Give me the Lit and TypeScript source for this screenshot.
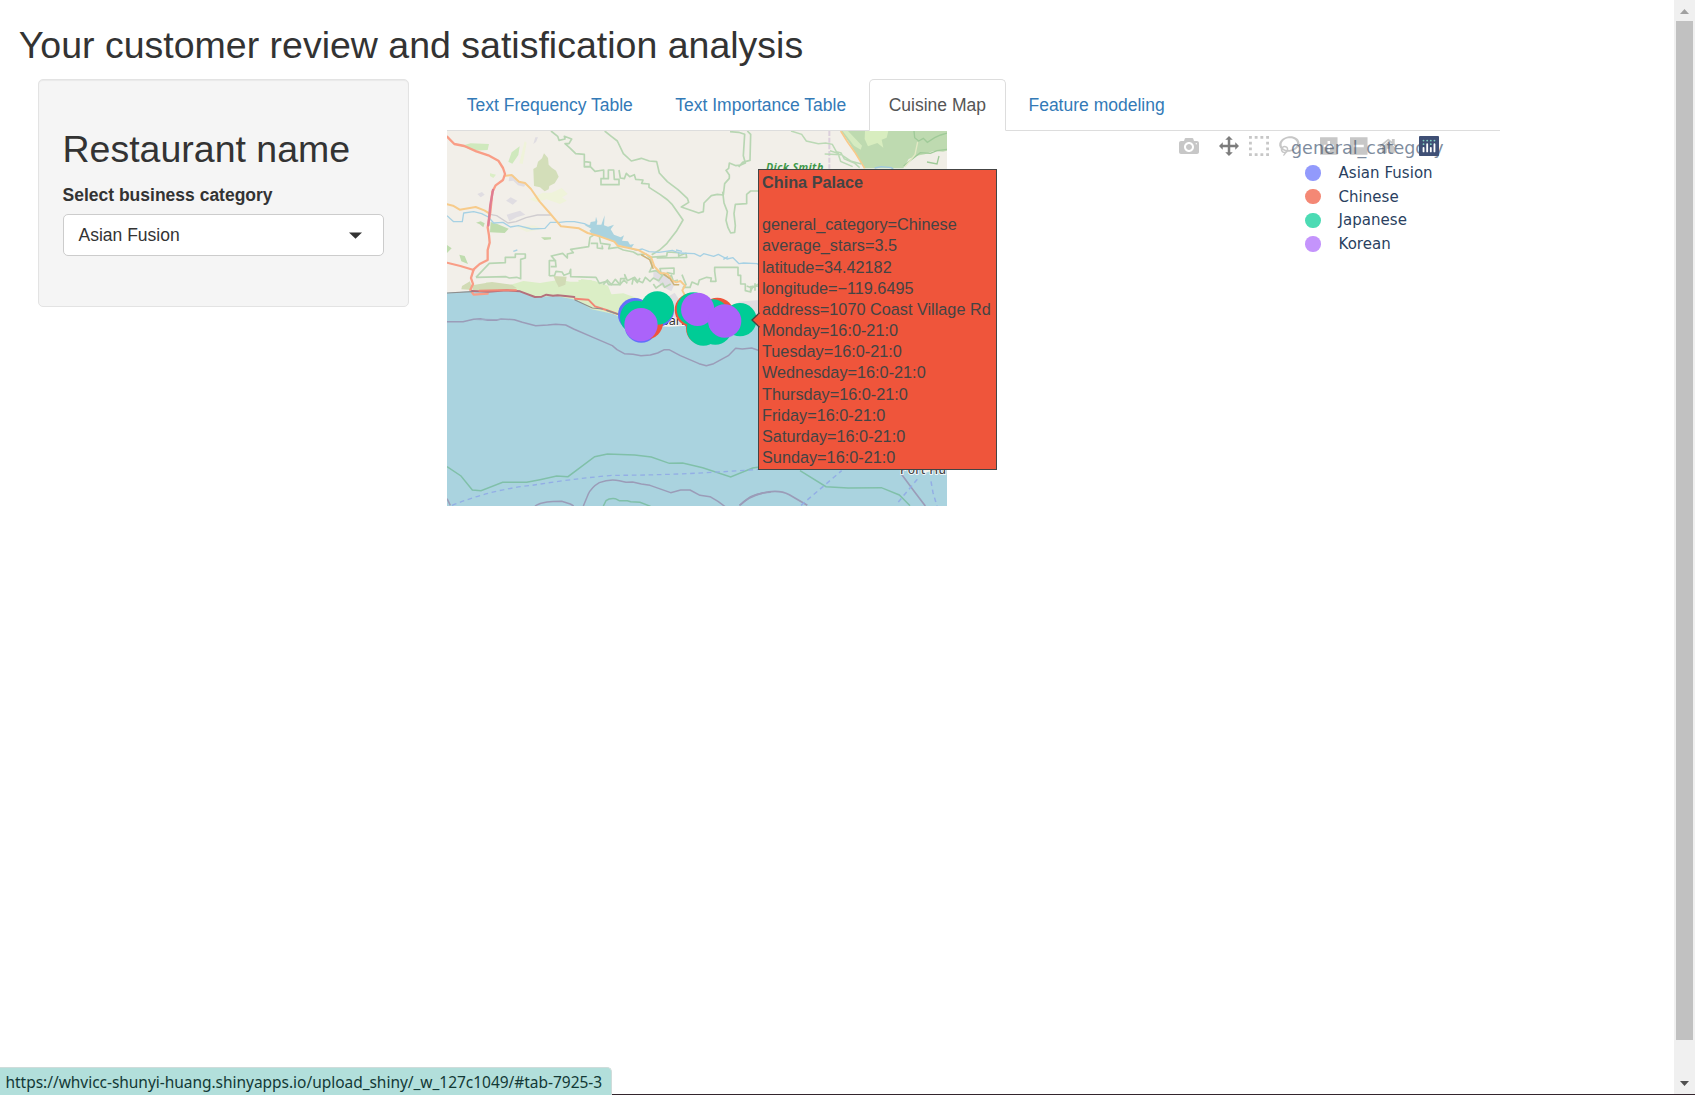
import { LitElement, html, svg, css } from "lit";
import { customElement } from "lit/decorators.js";

const UP = "matrix(1 0 0 -1 0 850)";

const TOOLS = [
  { name: "camera", w: 1000, d: "m500 450c-83 0-150-67-150-150 0-83 67-150 150-150 83 0 150 67 150 150 0 83-67 150-150 150z m400 150h-120c-16 0-34 13-39 29l-31 93c-6 15-23 28-40 28h-340c-16 0-34-13-39-28l-31-94c-6-15-23-28-40-28h-120c-55 0-100-45-100-100v-450c0-55 45-100 100-100h800c55 0 100 45 100 100v450c0 55-45 100-100 100z m-400-550c-138 0-250 112-250 250 0 138 112 250 250 250 138 0 250-112 250-250 0-138-112-250-250-250z m365 380c-19 0-35 16-35 35 0 19 16 35 35 35 19 0 35-16 35-35 0-19-16-35-35-35z" },
  { name: "pan start active", w: 1000, d: "m1000 350l-187 188 0-125-250 0 0 250 125 0-188 187-187-187 125 0 0-250-250 0 0 125-188-188 186-187 0 125 252 0 0-250-125 0 187-188 188 188-125 0 0 250 250 0 0-126 187 188z" },
  { name: "box", w: 1000, d: "m0 850l0-143 143 0 0 143-143 0z m286 0l0-143 143 0 0 143-143 0z m285 0l0-143 143 0 0 143-143 0z m286 0l0-143 143 0 0 143-143 0z m-857-286l0-143 143 0 0 143-143 0z m857 0l0-143 143 0 0 143-143 0z m-857-285l0-143 143 0 0 143-143 0z m857 0l0-143 143 0 0 143-143 0z m-857-286l0-143 143 0 0 143-143 0z m286 0l0-143 143 0 0 143-143 0z m285 0l0-143 143 0 0 143-143 0z m286 0l0-143 143 0 0 143-143 0z" },
  { name: "lasso", w: 1031, d: "m1018 538c-36 207-290 336-568 286-277-48-473-256-436-463 10-57 36-108 76-151-13-66 11-137 68-183 34-28 75-41 114-42l-55-70 0 0c-2-1-3-2-4-3-10-14-8-34 5-45 14-11 34-8 45 4 1 1 2 3 2 5l0 0 113 140c16 11 31 24 45 40 4 3 6 7 8 11 48-3 100 0 151 9 278 48 473 255 436 462z m-624-379c-80 14-149 48-197 96 42 42 109 47 156 9 33-26 47-66 41-105z m-187-74c-19 16-33 37-39 60 50-32 109-55 174-68-42-25-95-24-135 8z m360 75c-34-7-69-9-102-8 8 62-16 128-68 170-73 59-175 54-244-5-9 20-16 40-20 61-28 159 121 317 333 354s407-60 434-217c28-159-121-318-333-355z" },
  { name: "zoom-in start", w: 875, d: "m1 787l0-875 875 0 0 875-875 0z m687-500l-187 0 0-187-125 0 0 187-188 0 0 125 188 0 0 187 125 0 0-187 187 0 0-125z" },
  { name: "zoom-out", w: 875, d: "m0 788l0-876 876 0 0 876-876 0z m688-500l-500 0 0 125 500 0 0-125z" },
  { name: "home", w: 929, d: "m786 296v-267q0-15-11-26t-25-10h-214v214h-143v-214h-214q-15 0-25 10t-11 26v267q0 1 0 2t0 2l321 264 321-264q1-1 1-4z m124 39l-34-41q-5-5-12-6h-2q-7 0-12 3l-386 322-386-322q-7-4-13-4-7 2-12 7l-35 41q-4 5-3 12t6 12l401 334q18 15 42 15t43-15l136-114v109q0 8 5 13t13 5h107q8 0 13-5t5-13v-227l122-102q5-5 6-12t-4-13z" },
];

const HOVER = [
  "general_category=Chinese", "average_stars=3.5", "latitude=34.42182", "longitude=−119.6495",
  "address=1070 Coast Village Rd", "Monday=16:0-21:0", "Tuesday=16:0-21:0", "Wednesday=16:0-21:0",
  "Thursday=16:0-21:0", "Friday=16:0-21:0", "Saturday=16:0-21:0", "Sunday=16:0-21:0",
];

const LEGEND = [
  ["Asian Fusion", "#929afc"], ["Chinese", "#f48875"], ["Japanese", "#4cdbb4"], ["Korean", "#c494fc"],
];

const BLUE = "#636efa", RED = "#ef553b", GREEN = "#00cc96", PURPLE = "#ab63fa";
const MARKERS: [number, number, string][] = [
  [584, 584, BLUE], [652, 571, BLUE], [604, 618, BLUE], [770, 580, BLUE], [782, 598, BLUE],
  [619, 608, RED], [754, 570, RED], [832, 583, RED], [788, 625, RED],
  [590, 592, GREEN], [652, 564, GREEN], [760, 567, GREEN], [818, 588, GREEN],
  [790, 627, GREEN], [826, 624, GREEN], [900, 599, GREEN],
  [603, 614, PURPLE], [773, 568, PURPLE], [854, 603, PURPLE],
];

// Drawn in a 3x coordinate space; the viewBox scales it down to 500 x 375.
const map = svg`
  <rect x="0" y="0" width="1600" height="1200" fill="#f2efe9"/>
  <g fill="#dbeec6">
    <path d="M110 515l30-28 70 8 40-12 50 6 60-10 30 6 30 0 4-8 40 6 40 14 16 40-8 40 0 60-60-14-80-40-90-14-60-10z"/>
    <path d="M500 590l-10-65 60-5 30 10 60 20-20 60-120 0z"/>
    <path d="M62 78l30-8 55 2 -4 18-40 2z M205 125l10-28 24-18 -4 26-18 26z" fill="#cfe9bd"/>
    <path d="M268 238l40-20 40 0 32 24-20 10-40-14-30 8z M335 218l30-14 18 18-20 12z M238 130l16-66 6 4-12 64z" fill="#eff3da"/>
    <path d="M415 480l40 0 4 30-10 60-20 0z M150 160l18 4-8 10-10-6z"/>
    <path d="M230 320l50-4 30 10-50 10z" fill="#eff1dc"/>
  </g>
  <g fill="#bfdcae">
    <path d="M152 306l20 6 34 14-12 13-44-2z"/>
    <path d="M21 375l14 10-14 14z M58 404l16 4 10 24-20-8z M108 308l14-4 12 6 -4 12-12-10z M303 352l30 0 0 6-20 2z"/>
  </g>
  <path d="M280 147l10-6 4-16 12-10 6-15 12 14 2 20 10 10 12 8 8 18-12 20-16 8-2 10-12 6-14-12-18-4z" fill="#d3deb9"/>
  <path d="M96 496l60-10 60 8 14 10-30 8-100 0z M340 468l40 2-4 24-20 8-10-20z M66 498l24-14 8 26-34-2z" fill="#d1dbb5"/>
  <g fill="#e0dde2">
    <path d="M208 170l12-6 18 22 20 6-6 8-18-4-14-14-14 2z M198 242l14-10 20 10-14 12z M200 284l40-12 16 12-26 8-22 12z M286 52l8 0-6 14-8 6z M112 222l14-6 8 8-12 8z"/>
    <path d="M640 450l30 6 34 36-10 22-24-12-30-30z M684 530l20-12 14 22-4 60-24 16z M895 545l65-5 0 70-60 0z M700 580l34 0 0 36-34 0z"/>
  </g>
  <path d="M21 518L95 514 150 517 200 511 240 513 285 531 350 528 410 540 455 568 520 582 560 602 620 618 690 620 740 617 800 635 900 618 960 614 1050 660 1250 760 1400 980 1450 1060 1521 1040V1158H21z" fill="#aad3df"/>

  <g transform="translate(900,0)">
    <path d="M303 33L621 33 621 128 597 133 580 105 555 104 530 125 505 127 490 145 375 145 350 105 330 72z" fill="#bedab0"/>
    <path d="M375 33l70 0-5 20-15 6 5 24-18-14-28 10-10-22z" fill="#d8edbf"/>
    <path d="M308 33l16 0 42 44-4 12-20-12z" fill="#d6ebc0"/>
    <path d="M490 145l16-28 24-10 25-4 25-10 41 3V150z M597 100l24-8v60l-20-14z" fill="#f0eee6"/>
    <path d="M621 88l-30 4-20 8-30-2-36 28-14 12 M522 33l2 20 12 10 14-8 12 12 22-14 18-8 20-6 M597 108l-6 24-30-6" fill="none" stroke="#9fca98" stroke-width="4"/>
    <path d="M533 66l-8 38-30 36" fill="none" stroke="#e3e9c4" stroke-width="4"/>
    <path d="M302 33l20 32 24 34 28 46" fill="none" stroke="#f8c98a" stroke-width="5"/>
    <path d="M404 144l20-4 30 3 12 10" fill="none" stroke="#9fc8e0" stroke-width="4"/>
    <path d="M268 33V146" fill="none" stroke="#dccfdc" stroke-width="6" stroke-dasharray="15 5"/>
    <path d="M153 33l32 10 14 20 36 8 22-2 20 4 12 22 14 4 10 18 30 12 16 14 M254 102l50 2 30 20 30 8 M270 92l24 8 8 24 36 16" fill="none" stroke="#bbd9b5" stroke-width="4.500"/>
    <path d="M22 33l10 10-2 78-22 6-12 14" fill="none" stroke="#b8d6b3" stroke-width="5"/>
  </g>

  <g fill="none" stroke="#b8d6b3" stroke-width="5" stroke-linejoin="round">
    <path d="M333 33l20 16 4 12 18-4-2-8 22 8-8 14-12 0 16 14 16 16 26 2 0 38 18 0 0-14-16-2 M431 140l20 0 14 14 26-4 0 26-8 0 0 18 54 0 0-16-14 0-2-28-16 0 0 26-24 0 M537 150l4 24 12 2 6-16 10 10 14-6 4 14 22 2-4 10 22 2 0 10 34 22 22 16 14 14 32 46-20 34-28 36-22 20-24 14"/>
    <path d="M494 33l20 16 18 14 18 38 24 22 30-8 24 8 22 2 8 34 24 26 32 24 28 26 4 12-22 14 52 18 14-4 2-26 22-22 18-4 18 2 4-34 14-16 0-10-10-14 8-6 2-16 20 8 14-2 14-6-6-22 4-64-18-6-26-2"/>
    <path d="M848 215l4 34 10 26-4 26 6 22 8 16 12-2 2-20-4-36 4-28 34-2 0-28 12-10 22 0"/>
    <path d="M108 472l40-42 48-2 0-16 30 0 0-10 30 0 0 12-14 4 0 58-12-4-22 2-10-4-90 2"/>
    <path d="M328 468l0-46 18 0-12-14 34-8 14 14 0-12 18-4-8-10 54-8 4-28 16-10 12 8 4 20 28 4-4 12 26-4 18 8 30 6 14 8 24-2 10 10 52-4 2-12 34 2 0 10 22-8 2 12-90 2 M328 468l16-2 4-12 18 2 6 10 16-6 4-12 0 22 76 2 10 18 22-6 6 10 34 0 2-18 16 0-4-12 8 18 22-10 6 8 18 8 8-16 14 12 10-10 16 8 16-22 14 14 8-8 6 18 14-4 M632 410l4 30-8 16 20-4 16 12-4-18 42-2 0 18-22-4 M726 464l12 30-8 8 20 0 6-16 18 8 4-14 22-8 14 2 -2 10 16 0-4-30 0-12 70 0 0 24 8 0 0 26 14 0 0 20 16 4 0-16 28-2-4-22 12-8 8 16 14-4 6-14 12 8"/>
    <path d="M640 492l8 12 20-14 6 12 18-10 M452 370l20 0 0 14 16 2-2-10 M332 440l16 0-2-20 M490 494l12-14 12 14 12-16 14 16 12-14 10 10 M576 494l4-20 12 14 8-14 M920 498l16 6 20-12 M930 516l10-18 M945 512l0-22"/>
  </g>
  <g fill="none" stroke="#a6d1e4" stroke-width="4" stroke-linejoin="round">
    <path d="M21 287l20 18 26 0 4-26 30-4 24 6 20 10 16 18 28-2 22 14 24-4 40 10 40-2 16-18 28 0 20-2 24 0 30 6 40 20 30 6 20 26 14 10 22 6 30 12 18-4 20 8 30 2 40-6 20 8 46 2 18 8 10-8 30 8 14-6 26 14 18-4 18 18 14-2 40 2 28 16 26 10 20-2"/>
    <path d="M220 394l12-4 M708 390l18 4 M850 418l14-8"/>
  </g>
  <path d="M434 316l16-2 2-8 14-2 2-14 4 14-2 10 14 0 10-28-2 30 12 4 18-6-10 14 10 16 20 8 10-6-6 16 18 2 6 10 12-2-8 12-24-6-18-6-32-16-20-6-26-10-6-8 6-6z" fill="#aad3df"/>
  <g fill="none" stroke-linejoin="round" stroke-linecap="round">
    <path d="M21 253l18 4 20 12 48-8 26 10 16 10" stroke="#f7cb8b" stroke-width="6"/>
    <path d="M150 283l20 4 34 22 24-4 30-12 34-8 40 0" stroke="#d0cdd0" stroke-width="4"/>
    <path d="M197 167l18-2 22 20 18 4 18 18 26 38 30 34 34 40 54 6 26 14 36 10 44 16 10 12 30 6 34 8 36 20 10 28 18 20 22 2 12 20 14 6 12-4 14 14-8 14 8 16-6 20" stroke="#f7cb8b" stroke-width="6"/>
    <path d="M605 405l24 14 10 26M672 464l18 12 12 18 14 0" stroke="#cdb277" stroke-width="4.500"/>
    <path d="M21 50l22 22 30 6 36 16 36 12 30 16 14 22 6 18-6 18-22 16-10 20-6 60-8 46 4 24 2 22-6 22 0 30-24 12-18 16-8 26 6 18-8 18 10 14 42-3" stroke="#f99d86" stroke-width="7"/>
    <path d="M159 210l-8 44-6 62" stroke="#df7d92" stroke-width="7"/>
    <path d="M21 428l40 10 40 12" stroke="#f99d86" stroke-width="6"/>
    <path d="M96 513l50 2 54-4 40 3 45 17 20-1 14-6 20 3 14-1 30 3 20 2" stroke="#b5707c" stroke-width="6"/>
    <path d="M118 512l60-1 50 0M405 536l40 3 20 20 34 11 34 12" stroke="#f18675" stroke-width="6"/>
    <path d="M21 519l74-4M405 540l52 24 30 3M500 571l36 12" stroke="#8d8d8d" stroke-width="3.500"/>
  </g>

  <g transform="translate(0,540)">
    <g fill="none" stroke="#9b9cb8" stroke-width="4.500" stroke-linejoin="round">
      <path d="M21 65l48 0 32-7 20-2 22 5 26 0 14-4 40 2 24 8 40 10 36-2 24-2 30 2 24 12 60 26 56 24 14 12 22 12 26 2 24 4 28-2 22-6 20-10 14 0 34 18 56 24 22 6 22-6 44-24 22-22 20 2 28-3 24 8"/>
      <path d="M21 596l10 20M285 618c20-14 50-14 80-14l26 8 10 6M430 618l14-34q10-22 34-36 30-12 60-6l20 5 20-1 26 6 26 4 62 22 30-8 28 0 30 16 30 4 24 14 24 18M898 616l34-26q26-12 60-13"/>
    </g>
    <path d="M103 60l30-4 90 3-100 2z" fill="#9fa7c2"/>
    <path d="M21 500l42 28 34 42 26 2 65-25 72 0 40-8 50-11 34 2 80-60 38-8 82 3 50 6 54 19 40-1 60 14 84 28 66-27 20-3M490 618l8-16q10-8 28-6l12 6 24 0 10 3 28 2 32 12" fill="none" stroke="#80c0a9" stroke-width="4.500"/>
    <path d="M36 616q120-48 240-60 110-18 240-30 200 0 440-18" fill="none" stroke="#93aee5" stroke-width="4" stroke-dasharray="14 11"/>
    <text class="city" x="551" y="75">Santa Barbara</text>
  </g>
  <g transform="translate(900,540)" fill="none">
    <path d="M180 512l78 48 66 4 100-1 54 22 32 32" stroke="#80c0a9" stroke-width="4.500"/>
    <path d="M0 616q20-24 64-36 50-14 84 4l54 32M484 522l40 54 32 42" stroke="#9b9cb8" stroke-width="5"/>
    <path d="M183 616l122-104M475 606l60-72M573 544l6 34 12 40" stroke="#93aee5" stroke-width="4.500" stroke-dasharray="14 11"/>
  </g>
  <text class="port" x="1380" y="1063" textLength="138">Port Hu</text>
  <text class="forest" x="978" y="154" textLength="172">Dick Smith</text>
  ${MARKERS.map(([x, y, c]) => svg`<circle cx=${x} cy=${y} r="50" fill=${c}/>`)}
`;

@customElement("app-root")
export class AppRoot extends LitElement {
  static styles = css`
    :host { display: block; position: relative; box-sizing: border-box; width: 1695px; height: 1095px; overflow: hidden;
      background: #fff; color: #333; font: 17.5px/25px "Liberation Sans", Arial, sans-serif; }
    * { box-sizing: border-box; }
    svg { display: block; }
    .window { display: flex; height: 1095px; }
    .page { flex: 1; padding: 25px 0 0 18.75px; }
    h2 { margin: 0; font-size: 37.5px; line-height: 41.25px; font-weight: 400; white-space: nowrap; }
    .row { display: flex; margin-top: 12.75px; padding-left: 19.25px; align-items: flex-start; }
    .well { width: 371px; height: 228px; padding: 49px 24px 0 23.5px; border: 1px solid #e3e3e3; border-radius: 5px;
      background: #f5f5f5; box-shadow: inset 0 1px 1px rgba(0,0,0,.05); }
    .label { margin-top: 13px; font-weight: 700; }
    .select { display: flex; align-items: center; justify-content: space-between; height: 42px; margin-top: 6px;
      width: 321px; padding: 0 21px 0 15px; border: 1px solid #ccc; border-radius: 5px; background: #fff; }
    .main { width: 1053px; margin-left: 38px; }
    .tabs { display: flex; gap: 3px; height: 52px; border-bottom: 1px solid #ddd; }
    .tab { height: 52px; padding: 13.5px 19.75px 0; color: #337ab7; white-space: nowrap; }
    .tab.on { padding: 12.5px 18.75px 0; color: #555; background: #fff; border: 1px solid #ddd; border-bottom-color: #fff; border-radius: 5px 5px 0 0; }
    .plot { display: flex; position: relative; height: 375px; }
    .side { position: absolute; left: 732px; top: 0; width: 290px; font-family: "DejaVu Sans", Verdana, sans-serif; color: #2a3f5f; }
    .tools { display: flex; gap: 10px; padding-top: 5px; position: relative; z-index: 1; }
    .tool { width: 20px; height: 20px; display: flex; justify-content: flex-start; fill: rgba(68,68,68,.3); }
    .start { margin-left: 10px; }
    .zoom-in, .zoom-out { padding-left: 1px; }
    .active { fill: rgba(68,68,68,.7); }
    .tool svg { flex: none; }
    .legend-title { position: absolute; left: 112px; top: 5px; font-size: 17.5px; line-height: 24px; opacity: .6; white-space: nowrap; }
    .legend { padding: 5px 0 0 126px; }
    .item { display: flex; align-items: center; gap: 18px; height: 23.75px; font-size: 15px; letter-spacing: .04px; }
    .item span { padding-top: 1px; }
    .dot { width: 15.5px; height: 15.5px; border-radius: 50%; }
    .tip { position: absolute; left: 311px; top: 38px; width: 238.5px; height: 301px; padding: 2px 0 0 3px; border: 1px solid #444;
      background: #ef553b; color: #444; font-size: 16.25px; line-height: 21.15px; white-space: nowrap; }
    .arrow { position: absolute; left: -8px; top: 142px; }
    .tip b, .tip span { display: block; }
    .tip b { margin-bottom: 21.15px; }
    .city { font: 38px "Noto Sans", sans-serif; fill: #333; stroke: #fff; stroke-width: 4; paint-order: stroke; }
    .port { font: 500 36px "Noto Sans", sans-serif; fill: #444; stroke: #fff; stroke-width: 5; paint-order: stroke; }
    .forest { font: italic 700 32px "Noto Sans", sans-serif; fill: #3f9a4b; }
    .scroll { width: 21px; height: 1094px; background: #f0f0f0; display: flex; flex-direction: column; align-items: center; }
    .scroll svg { flex: none; }
    .thumb { width: 17px; height: 1019px; background: #c1c1c1; }
    .status { position: absolute; left: 0; bottom: 0; width: 612px; height: 28px; padding: 3px 0 0 5.5px; background: #b2dfdb;
      border: solid #cfdcda; border-width: 1px 1px 0 0; border-radius: 0 5px 0 0; color: #123936; font: 15.5px/22px "Noto Sans", sans-serif;
      letter-spacing: -.035px; white-space: nowrap; }
    .edge { position: absolute; left: 612px; right: 0; bottom: 0; height: 1px; background: #33252d; }
  `;

  render() {
    return html`
      <div class="window">
        <div class="page">
          <h2>Your customer review and satisfication analysis</h2>
          <div class="row">
            <div class="well">
              <h2>Restaurant name</h2>
              <div class="label">Select business category</div>
              <div class="select">Asian Fusion
                <svg width="13" height="7" viewBox="0 0 13 7"><path d="M0 .5h13L6.500 6.800z" fill="#333"/></svg>
              </div>
            </div>
            <div class="main">
              <div class="tabs">
                <div class="tab">Text Frequency Table</div>
                <div class="tab">Text Importance Table</div>
                <div class="tab on">Cuisine Map</div>
                <div class="tab">Feature modeling</div>
              </div>
              <div class="plot">
                <svg width="500" height="375" viewBox="21 33 1500 1125">${map}</svg>
                <div class="tip">
                  <svg class="arrow" width="10" height="16" viewBox="0 0 10 16"><path d="M8.500 .8L1 8 8.500 15.200" fill="#ef553b" stroke="#444" stroke-width="1.300"/><path d="M7.800 2h2.200v12H7.800z" fill="#ef553b"/></svg>
                  <b>China Palace</b>
                  ${HOVER.map((l) => html`<span>${l}</span>`)}
                </div>
                <div class="side">
                  <div class="tools">
                    ${TOOLS.map((t) => html`<div class="tool ${t.name}">
                      <svg height="20" width=${t.w / 50} viewBox="0 0 ${t.w} 1000"><path transform=${UP} d=${t.d}/></svg></div>`)}
                    <div class="tool start">
                      <svg width="20" height="20" viewBox="0 0 132 132">
                        <rect width="132" height="132" rx="6" fill="#3f4f75"/>
                        <g fill="#80cfbe"><circle cx="30" cy="30" r="6"/><circle cx="54" cy="30" r="6"/><circle cx="78" cy="30" r="6"/><circle cx="102" cy="30" r="6"/><circle cx="30" cy="54" r="6"/><circle cx="78" cy="54" r="6"/></g>
                        <path d="M30 78v24M54 54v48M78 78v24M102 54v48" stroke="#fff" stroke-width="12" stroke-linecap="round"/>
                      </svg>
                    </div>
                  </div>
                  <div class="legend-title">general_category</div>
                  <div class="legend">
                    ${LEGEND.map(([n, c]) => html`<div class="item"><div class="dot" style="background:${c}"></div><span>${n}</span></div>`)}
                  </div>
                </div>
              </div>
            </div>
          </div>
        </div>
        <div class="scroll">
          <svg width="21" height="21" viewBox="0 0 21 21"><path d="M6 14L10.500 9 15 14z" fill="#a0a0a0"/></svg>
          <div class="thumb"></div>
          <svg width="21" height="54" viewBox="0 0 21 54"><path d="M6 41h9l-4.500 5z" fill="#505050"/></svg>
        </div>
      </div>
      <div class="edge"></div>
      <div class="status">https://whvicc-shunyi-huang.shinyapps.io/upload_shiny/_w_127c1049/#tab-7925-3</div>
    `;
  }
}
